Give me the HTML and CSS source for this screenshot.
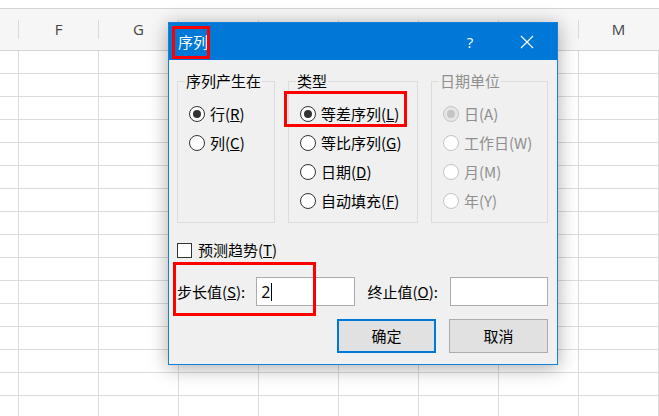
FILE: index.html
```html
<!DOCTYPE html>
<html lang="zh-CN">
<head>
<meta charset="utf-8">
<title>序列</title>
<link rel="stylesheet" href="styles.css">
</head>
<body>
<div class="sheet">
  <div class="colhead">
    <div class="ch first"></div>
    <div class="ch">F</div>
    <div class="ch">G</div>
    <div class="ch">H</div>
    <div class="ch">I</div>
    <div class="ch">J</div>
    <div class="ch">K</div>
    <div class="ch">L</div>
    <div class="ch">M</div>
  </div>
  <div class="grid"></div>

  <div class="dialog">
    <div class="titlebar">
      <span class="title">序列</span>
      <span class="help">?</span>
      <span class="close"><svg width="14" height="14" viewBox="0 0 14 14"><path d="M1 1 L13 13 M13 1 L1 13" stroke="#fff" stroke-width="1.2" fill="none"/></svg></span>
    </div>
    <div class="dbody">
      <div class="groups">
        <div class="group g1">
          <span class="legend">序列产生在</span>
          <div class="opts">
            <div class="opt"><span class="radio on"></span>行(<u>R</u>)</div>
            <div class="opt"><span class="radio"></span>列(<u>C</u>)</div>
          </div>
        </div>
        <div class="group g2">
          <span class="legend">类型</span>
          <div class="opts">
            <div class="opt"><span class="radio on"></span>等差序列(<u>L</u>)</div>
            <div class="opt"><span class="radio"></span>等比序列(<u>G</u>)</div>
            <div class="opt"><span class="radio"></span>日期(<u>D</u>)</div>
            <div class="opt"><span class="radio"></span>自动填充(<u>F</u>)</div>
          </div>
        </div>
        <div class="group g3 disabled">
          <span class="legend">日期单位</span>
          <div class="opts">
            <div class="opt"><span class="radio on"></span>日(A)</div>
            <div class="opt"><span class="radio"></span>工作日(W)</div>
            <div class="opt"><span class="radio"></span>月(M)</div>
            <div class="opt"><span class="radio"></span>年(Y)</div>
          </div>
        </div>
      </div>
      <div class="check"><span class="box"></span>预测趋势(<u>T</u>)</div>
      <div class="fields">
        <span class="flabel">步长值(<u>S</u>):</span>
        <div class="input">2<span class="caret"></span></div>
        <span class="flabel second">终止值(<u>O</u>):</span>
        <div class="input"></div>
      </div>
      <div class="buttons">
        <div class="btn primary">确定</div>
        <div class="btn">取消</div>
      </div>
    </div>
    <div class="mark m-title"></div>
    <div class="mark m-type"></div>
    <div class="mark m-step"></div>
  </div>
</div>
</body>
</html>
```

FILE: styles.css
```css
html, body {
  margin: 0;
  padding: 0;
  background: #fff;
}

.sheet {
  position: relative;
  width: 659px;
  height: 416px;
  overflow: hidden;
  padding-top: 8px;
  box-sizing: border-box;
  background: #fff;
  font-family: "Noto Sans CJK SC", "Noto Sans", sans-serif;
}

.colhead {
  display: flex;
  height: 30px;
  padding-top: 11px;
  box-sizing: content-box;
  border-top: 1px solid #d4d4d4;
  border-bottom: 1px solid #d4d4d4;
  background: #f6f6f6;
}

.ch {
  flex: 0 0 80px;
  box-sizing: border-box;
  height: 19px;
  border-left: 1px solid #dadada;
  text-align: center;
  font-family: "Open Sans", "Noto Sans", sans-serif;
  font-size: 15px;
  line-height: 19px;
  color: #444;
}

.ch.first {
  flex-basis: 18px;
  border-left: none;
}

.grid {
  height: 376px;
  background-image:
    repeating-linear-gradient(to bottom, transparent 0 22px, #dcdcdc 22px 23px),
    repeating-linear-gradient(to right, #dcdcdc 0 1px, transparent 1px 80px);
  background-position: 0 0, 18px 0;
}

/* dialog */
.dialog {
  position: absolute;
  left: 168px;
  top: 22px;
  width: 390px;
  height: 343px;
  box-sizing: border-box;
  border: 1px solid #1680d8;
  background: #f0f0f0;
  box-shadow: 0 3px 18px rgba(0, 0, 0, 0.33);
  font-size: 15px;
  color: #000;
}

.titlebar {
  display: flex;
  align-items: center;
  height: 37px;
  padding: 0 18px 0 9px;
  background: #0078d7;
  color: #fff;
}

.title {
  font-size: 15px;
  line-height: 20px;
}

.help {
  margin-left: auto;
  width: 24px;
  text-align: center;
  font-family: "Open Sans", "Noto Sans", sans-serif;
  font-size: 15px;
  line-height: 20px;
}

.close {
  width: 24px;
  margin-left: 33px;
  display: flex;
  justify-content: center;
  align-items: center;
}

.dbody {
  padding: 21px 9px 0 8px;
}

.groups {
  display: flex;
  gap: 13px;
}

.group {
  box-sizing: border-box;
  height: 142px;
  border: 1px solid #dcdcdc;
  padding-left: 11px;
}

.g1 { width: 98px; }
.g2 { width: 130px; }
.g3 { width: 117px; }

.legend {
  display: block;
  width: fit-content;
  margin: -11px 0 0 -4px;
  padding: 0 1px;
  background: #f0f0f0;
  line-height: 20px;
}

.opts {
  margin-top: 8px;
}

.opt {
  display: flex;
  align-items: center;
  height: 29px;
  line-height: 20px;
  white-space: nowrap;
}

.radio {
  flex: 0 0 auto;
  display: flex;
  align-items: center;
  justify-content: center;
  width: 16px;
  height: 16px;
  box-sizing: border-box;
  margin-right: 5px;
  border: 1px solid #333;
  border-radius: 50%;
  background: #fff;
}

.radio.on::after {
  content: "";
  width: 8px;
  height: 8px;
  border-radius: 50%;
  background: #333;
}

.disabled .legend,
.disabled .opt {
  color: #8f8f8f;
}

.disabled .radio {
  border-color: #c4c4c4;
}

.disabled .radio.on {
  background: #e6e6e6;
}

.disabled .radio.on::after {
  background: #c4c4c4;
}

.check {
  display: flex;
  align-items: center;
  height: 20px;
  margin-top: 17px;
  line-height: 20px;
}

.box {
  width: 15px;
  height: 15px;
  box-sizing: border-box;
  margin-right: 6px;
  border: 1px solid #333;
  background: #fff;
}

.fields {
  display: flex;
  align-items: center;
  margin-top: 17px;
  line-height: 20px;
}

.flabel {
  width: 80px;
  white-space: nowrap;
}

.flabel.second {
  width: 83px;
  margin-left: 13px;
}

.input {
  display: flex;
  align-items: center;
  width: 99px;
  height: 29px;
  box-sizing: border-box;
  padding-left: 4px;
  border: 1px solid #ababab;
  background: #fff;
  font-family: "Open Sans", "Noto Sans", sans-serif;
  font-size: 16px;
}

.caret {
  width: 1px;
  height: 18px;
  margin-left: 1px;
  background: #000;
}

.buttons {
  display: flex;
  justify-content: flex-end;
  gap: 13px;
  margin-top: 13px;
}

.btn {
  display: flex;
  align-items: center;
  justify-content: center;
  width: 99px;
  height: 34px;
  box-sizing: border-box;
  border: 1px solid #adadad;
  background: #e1e1e1;
  line-height: 20px;
}

.btn.primary {
  border: 2px solid #0078d7;
}

/* red annotation boxes */
.mark {
  position: absolute;
  box-sizing: border-box;
  border: 3px solid #f00;
}

.m-title { left: 3px; top: 3px; width: 38px; height: 33px; }
.m-type { left: 115px; top: 68px; width: 123px; height: 36px; }
.m-step { left: 4px; top: 239px; width: 143px; height: 54px; }
```
